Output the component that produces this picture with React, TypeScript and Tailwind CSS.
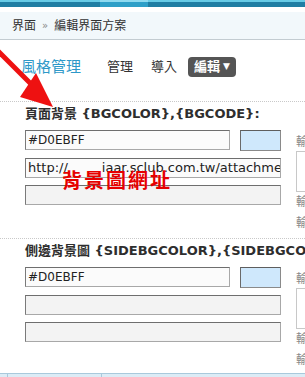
const cjk = "'DejaVu Sans', 'Noto Sans CJK TC', sans-serif";

function Field({ value, wide = true, tint = false, big = false }: { value?: React.ReactNode; wide?: boolean; tint?: boolean; big?: boolean }) {
  return (
    <div
      className={`h-[20px] border border-[#a8a8a8] border-t-[#6e6e6e] border-l-[#7a7a7a] px-[2px] leading-[18px] text-[#222] whitespace-nowrap overflow-hidden ${
        wide ? 'w-[256px]' : 'w-[206px]'
      } ${tint ? 'bg-[#f3f3f3]' : 'bg-[#fbfbfb]'} ${big ? 'text-[13px]' : 'text-[12px]'}`}
    >
      {value}
    </div>
  );
}

function Swatch() {
  return <div className="h-[21px] w-[41px] bg-[#cfe8fc] border border-[#8a8a8a] border-t-[#5e5e5e] border-l-[#6a6a6a]" />;
}

function Side() {
  return (
    <div className="flex flex-col text-[12px] leading-[14px] text-[#8a8a8a]">
      <span className="mt-[5px]">輸</span>
      <div className="mt-[2px] h-[41px] w-[20px] border border-[#c8c8c8] bg-white" />
      <span className="mt-[3px]">輸</span>
      <span className="mt-[7px]">輸</span>
    </div>
  );
}

function Section({ title, rows }: { title: string; rows: React.ReactNode }) {
  return (
    <div className="border-t border-dotted border-[#c9c9c9] pl-[25px] pb-[8px]">
      <div className="h-[24px] text-[13px] font-bold leading-[24px] text-[#2e2e2e] whitespace-nowrap">{title}</div>
      <div className="mt-[4px] flex gap-[15px]">
        <div className="flex w-[256px] shrink-0 flex-col gap-[7px]">{rows}</div>
        <Side />
      </div>
    </div>
  );
}

export default function App() {
  return (
    <div className="relative flex h-[377px] w-[305px] flex-col overflow-hidden bg-white" style={{ fontFamily: cjk }}>
      {/* top strip */}
      <div className="flex h-[7px]">
        <div className="w-[100px] border-t-2 border-[#67cbe6] bg-[#1f7ea4]" />
        <div className="w-[48px] border-t-2 border-[#8edaf0] bg-[#2d9fc8]" />
        <div className="flex-1 border-t-2 border-[#67cbe6] bg-[#1f7ea4]" />
      </div>
      <div className="h-[5px] bg-white" />
      <div className="flex h-[28px] items-center border-b border-[#c3ccd1] bg-[#f2f8fb] pl-[12px] text-[12px] text-[#333]">
        界面 <span className="mx-[6px] text-[10px] text-[#888]">»</span> 編輯界面方案
      </div>

      {/* tabs */}
      <div className="mt-[17px] flex h-[20px] items-center pl-[21px] text-[13px]">
        <span className="text-[15px] text-[#2e98c8]">風格管理</span>
        <span className="ml-[26px] text-[#333]">管理</span>
        <span className="ml-[18px] text-[#333]">導入</span>
        <span className="ml-[11px] flex h-[20px] items-center gap-[3px] rounded-[4px] bg-[#555] px-[6px] font-bold text-white">
          編輯<span className="text-[9px]">▼</span>
        </span>
      </div>

      <div className="mt-[24px] flex-1 overflow-hidden">
        <Section
          title="頁面背景 {BGCOLOR},{BGCODE}:"
          rows={
            <>
              <div className="flex gap-[10px]">
                <Field value="#D0EBFF" wide={false} />
                <Swatch />
              </div>
              <Field big value={<>http://<span className="inline-block w-[34px]" />iaar.sclub.com.tw/attachment/</>} />
              <Field tint />
            </>
          }
        />
        <Section
          title="側邊背景圖 {SIDEBGCOLOR},{SIDEBGCODE}:"
          rows={
            <>
              <div className="flex gap-[10px]">
                <Field value="#D0EBFF" wide={false} />
                <Swatch />
              </div>
              <Field tint />
              <Field tint />
            </>
          }
        />
      </div>

      {/* bottom bar */}
      <div className="flex h-[4px] border-t border-[#a9c9dc] bg-[#dcecf6]">
        <div className="w-[8px] border-r border-[#a9c9dc]" />
        <div className="w-[94px] border-r border-[#a9c9dc]" />
      </div>

      {/* annotation overlays */}
      <div className="absolute left-[62px] top-[167px] text-[20px] font-semibold leading-[28px] tracking-[2px] text-[#e60000]">
        背景圖網址
      </div>
      <svg className="absolute left-0 top-[45px]" width="70" height="70" viewBox="0 45 70 70">
        <line x1="-2" y1="51" x2="42" y2="95" stroke="#ee1111" strokeWidth="5" />
        <polygon points="36,73 53,107 20,97" fill="#ee1111" />
      </svg>
    </div>
  );
}
